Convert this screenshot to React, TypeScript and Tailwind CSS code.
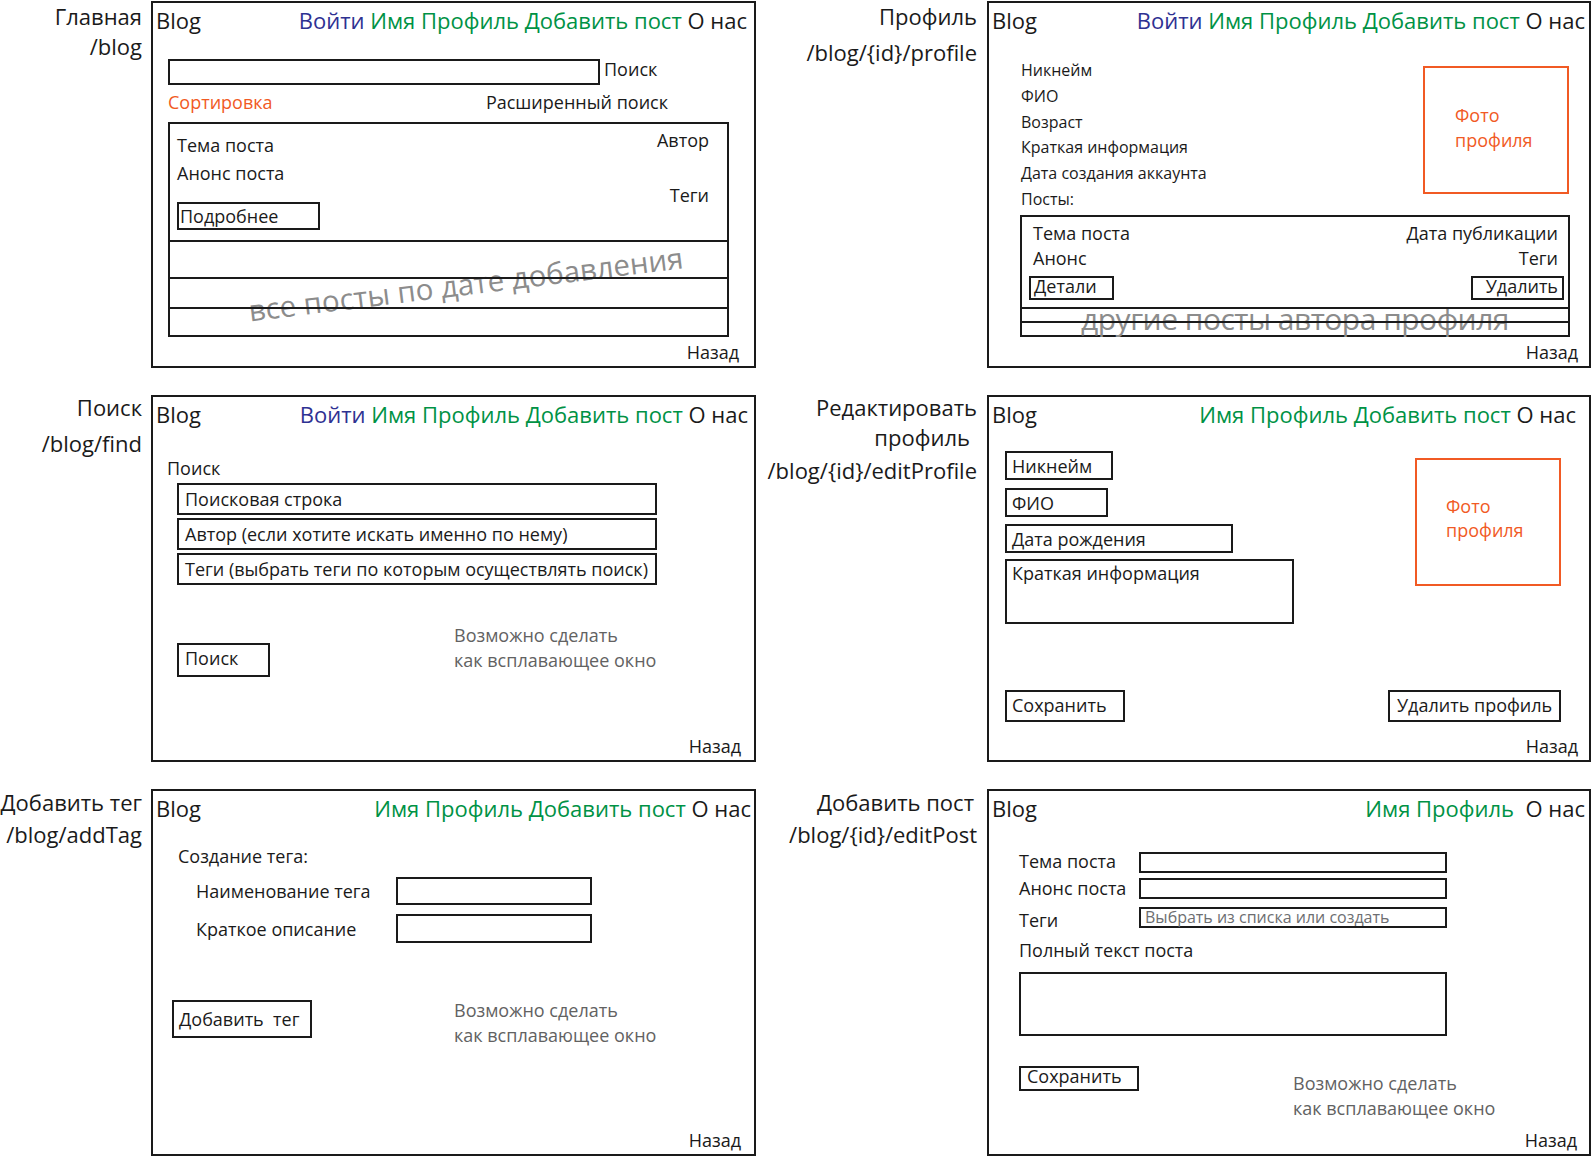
import React from "react";

const B = "border-2 border-[#1a1a1a]";
const ORANGE_BOX = "border-2 border-[#f15a24] text-[#f15a24]";
const NOTE = "leading-[25px] text-[#626262] whitespace-nowrap";

const navFull = (
  <>
    <span className="text-[#2e3192]">Войти</span>{" "}
    <span className="text-[#009245]">Имя Профиль Добавить пост</span> О нас
  </>
);

const navUser = (
  <>
    <span className="text-[#009245]">Имя Профиль Добавить пост</span> О нас
  </>
);

const navShort = (
  <>
    <span className="text-[#009245]">Имя Профиль</span>
    {"\u00a0 "}О нас
  </>
);

function Frame({ children }: { children: React.ReactNode }) {
  return <div className={`relative flex h-[367px] flex-col bg-white ${B}`}>{children}</div>;
}

function Header({ nav, pr }: { nav: React.ReactNode; pr: string }) {
  return (
    <div className={`flex items-start justify-between whitespace-nowrap pl-[3px] pt-[3px] text-[22px] leading-[28px] ${pr}`}>
      <span>Blog</span>
      <span>{nav}</span>
    </div>
  );
}

function Back({ pr }: { pr: string }) {
  return <div className={`mt-auto self-end pb-[2px] text-[18px] leading-[24px] ${pr}`}>Назад</div>;
}

function Route({ children, pr }: { children: React.ReactNode; pr: string }) {
  return (
    <div className={`flex flex-col items-end whitespace-nowrap text-[22px] leading-[28px] ${pr}`}>{children}</div>
  );
}

function HomeFrame() {
  return (
    <Frame>
      <Header nav={navFull} pr="pr-[7px]" />
      <div className="ml-[15px] mt-[25px] flex items-start">
        <div className={`h-[26px] w-[432px] ${B}`} />
        <span className="-mt-[2px] ml-[4px] text-[18px] leading-[24px]">Поиск</span>
      </div>
      <div className="ml-[15px] mt-[5px] flex w-[500px] justify-between text-[18px] leading-[24px]">
        <span className="text-[#f15a24]">Сортировка</span>
        <span>Расширенный поиск</span>
      </div>
      <div className={`relative ml-[15px] mt-[8px] flex h-[215px] w-[561px] flex-col text-[18px] leading-[24px] ${B}`}>
        <div className="pointer-events-none absolute inset-x-0 top-[143px] z-0 flex justify-center pl-[35px]">
          <span className="rotate-[-7deg] whitespace-nowrap text-[29.5px] leading-[34px] text-[#8c8c8c]">
            все посты по дате добавления
          </span>
        </div>
        <div className="relative z-10 flex h-[118px] justify-between border-b-2 border-[#1a1a1a] pl-[7px] pr-[18px]">
          <div className="flex flex-col items-start pt-[9px]">
            <span>Тема поста</span>
            <span className="mt-[4px]">Анонс поста</span>
            <div className={`mt-[17px] flex h-[28px] w-[143px] items-center pl-[1px] ${B}`}>Подробнее</div>
          </div>
          <div className="flex flex-col items-end pt-[4px]">
            <span>Автор</span>
            <span className="mt-[31px]">Теги</span>
          </div>
        </div>
        <div className="relative z-10 h-[37px] border-b-2 border-[#1a1a1a]" />
        <div className="relative z-10 h-[30px] border-b-2 border-[#1a1a1a]" />
        <div className="flex-1" />
      </div>
      <Back pr="pr-[15px]" />
    </Frame>
  );
}

function ProfileFrame() {
  const fields = ["Никнейм", "ФИО", "Возраст", "Краткая информация", "Дата создания аккаунта", "Посты:"];
  return (
    <Frame>
      <Header nav={navFull} pr="pr-[4px]" />
      <div className="mt-[24px] flex items-start justify-between pl-[32px] pr-[20px]">
        <div className="flex flex-col whitespace-nowrap text-[16px] leading-[25.8px]">
          {fields.map((f) => (
            <span key={f}>{f}</span>
          ))}
        </div>
        <div className={`mt-[8px] h-[128px] w-[146px] pl-[30px] pt-[35px] text-[18px] leading-[25px] ${ORANGE_BOX}`}>
          Фото
          <br />
          профиля
        </div>
      </div>
      <div className={`relative ml-[31px] mt-[2px] flex h-[122px] w-[550px] flex-col text-[18px] leading-[25px] ${B}`}>
        <div className="pointer-events-none absolute inset-x-0 top-[87px] z-0 flex justify-center">
          <span className="whitespace-nowrap text-[30px] leading-[30px] tracking-[-0.5px] text-[#8c8c8c]">
            другие посты автора профиля
          </span>
        </div>
        <div className="relative z-10 flex h-[92px] flex-col border-b-2 border-[#1a1a1a] pt-[4px]">
          <div className="flex justify-between pl-[11px] pr-[10px]">
            <span>Тема поста</span>
            <span>Дата публикации</span>
          </div>
          <div className="flex justify-between pl-[11px] pr-[10px]">
            <span>Анонс</span>
            <span>Теги</span>
          </div>
          <div className="mt-[5px] flex justify-between pl-[7px] pr-[4px] leading-[17px]">
            <div className={`h-[24px] w-[85px] pl-[3px] ${B}`}>Детали</div>
            <div className={`h-[24px] w-[93px] pr-[4px] text-right ${B}`}>Удалить</div>
          </div>
        </div>
        <div className="relative z-10 h-[14px] border-b-2 border-[#1a1a1a]" />
        <div className="flex-1" />
      </div>
      <Back pr="pr-[11px]" />
    </Frame>
  );
}

function FindFrame() {
  const inputs = [
    "Поисковая строка",
    "Автор (если хотите искать именно по нему)",
    "Теги (выбрать теги по которым осуществлять поиск)",
  ];
  return (
    <Frame>
      <Header nav={navFull} pr="pr-[6px]" />
      <div className="mt-[28px] pl-[14px] text-[18px] leading-[24px]">Поиск</div>
      <div className="ml-[24px] mt-[3px] flex flex-col gap-[3px] text-[18px] leading-[24px]">
        {inputs.map((t) => (
          <div key={t} className={`flex h-[32px] w-[480px] items-center whitespace-nowrap pl-[6px] ${B}`}>
            {t}
          </div>
        ))}
      </div>
      <div className="ml-[24px] mt-[38px] flex items-start text-[18px]">
        <div className={`mt-[20px] h-[34px] w-[93px] pl-[6px] pt-[1px] leading-[24px] ${B}`}>Поиск</div>
        <div className={`ml-[184px] ${NOTE}`}>
          Возможно сделать
          <br />
          как всплавающее окно
        </div>
      </div>
      <Back pr="pr-[13px]" />
    </Frame>
  );
}

function EditProfileFrame() {
  return (
    <Frame>
      <Header nav={navUser} pr="pr-[13px]" />
      <div className="mt-[23px] flex items-start justify-between pl-[16px] pr-[28px] text-[18px] leading-[24px]">
        <div className="flex flex-col items-start whitespace-nowrap">
          <div className={`flex h-[29px] w-[108px] items-center pl-[5px] ${B}`}>Никнейм</div>
          <div className={`mt-[8px] flex h-[29px] w-[103px] items-center pl-[5px] ${B}`}>ФИО</div>
          <div className={`mt-[7px] flex h-[29px] w-[228px] items-center pl-[5px] ${B}`}>Дата рождения</div>
          <div className={`mt-[6px] h-[65px] w-[289px] pl-[5px] ${B}`}>Краткая информация</div>
        </div>
        <div className={`mt-[7px] h-[128px] w-[146px] pl-[29px] pt-[34px] ${ORANGE_BOX}`}>
          Фото
          <br />
          профиля
        </div>
      </div>
      <div className="mt-[66px] flex justify-between pl-[16px] pr-[28px] text-[18px] leading-[24px]">
        <div className={`h-[32px] w-[120px] pl-[5px] pt-[1px] ${B}`}>Сохранить</div>
        <div className={`h-[32px] w-[173px] whitespace-nowrap pl-[7px] pt-[1px] ${B}`}>Удалить профиль</div>
      </div>
      <Back pr="pr-[11px]" />
    </Frame>
  );
}

function AddTagFrame() {
  return (
    <Frame>
      <Header nav={navUser} pr="pr-[3px]" />
      <div className="mt-[22px] pl-[25px] text-[18px] leading-[24px]">Создание тега:</div>
      <div className="mt-[9px] flex items-center text-[18px] leading-[24px]">
        <span className="w-[243px] shrink-0 whitespace-nowrap pl-[43px]">Наименование тега</span>
        <div className={`h-[28px] w-[196px] ${B}`} />
      </div>
      <div className="mt-[9px] flex items-center text-[18px] leading-[24px]">
        <span className="w-[243px] shrink-0 whitespace-nowrap pl-[43px]">Краткое описание</span>
        <div className={`h-[29px] w-[196px] ${B}`} />
      </div>
      <div className="ml-[19px] mt-[57px] flex items-start text-[18px]">
        <div className={`flex h-[38px] w-[140px] items-center whitespace-pre pl-[5px] leading-[24px] ${B}`}>
          {"Добавить  тег"}
        </div>
        <div className={`-mt-[2px] ml-[142px] ${NOTE}`}>
          Возможно сделать
          <br />
          как всплавающее окно
        </div>
      </div>
      <Back pr="pr-[13px]" />
    </Frame>
  );
}

function EditPostFrame() {
  return (
    <Frame>
      <Header nav={navShort} pr="pr-[4px]" />
      <div className="mt-[27px] flex items-start pl-[30px] text-[18px] leading-[24px]">
        <span className="w-[120px] shrink-0">Тема поста</span>
        <div className={`mt-[3px] h-[21px] w-[308px] ${B}`} />
      </div>
      <div className="mt-[3px] flex items-start pl-[30px] text-[18px] leading-[24px]">
        <span className="w-[120px] shrink-0 whitespace-nowrap">Анонс поста</span>
        <div className={`mt-[2px] h-[21px] w-[308px] ${B}`} />
      </div>
      <div className="mt-[7px] flex items-start pl-[30px] text-[18px] leading-[24px]">
        <span className="mt-[1px] w-[120px] shrink-0">Теги</span>
        <div className={`h-[21px] w-[308px] whitespace-nowrap pl-[4px] text-[16px] leading-[17px] text-[#6d6e71] ${B}`}>
          Выбрать из списка или создать
        </div>
      </div>
      <div className="mt-[6px] pl-[30px] text-[18px] leading-[24px]">Полный текст поста</div>
      <div className={`ml-[30px] mt-[10px] h-[64px] w-[428px] ${B}`} />
      <div className="ml-[30px] mt-[30px] flex items-start text-[18px]">
        <div className={`h-[25px] w-[120px] pl-[6px] leading-[17px] ${B}`}>Сохранить</div>
        <div className={`ml-[154px] mt-[5px] ${NOTE}`}>
          Возможно сделать
          <br />
          как всплавающее окно
        </div>
      </div>
      <Back pr="pr-[12px]" />
    </Frame>
  );
}

export default function App() {
  return (
    <div className="min-h-[1157px] w-[1593px] bg-white font-['Open_Sans',sans-serif] text-[#1a1a1a]">
      <div className="grid grid-cols-[151px_605px_231px_604px] gap-y-[27px] pt-[1px]">
        <Route pr="pr-[9px]">
          <span className="mt-[0.5px]">Главная</span>
          <span className="mt-[2px]">/blog</span>
        </Route>
        <HomeFrame />
        <Route pr="pr-[10px]">
          <span className="mt-[0.5px]">Профиль</span>
          <span className="mt-[8px]">/blog/{"{id}"}/profile</span>
        </Route>
        <ProfileFrame />

        <Route pr="pr-[9px]">
          <span className="-mt-[2.5px]">Поиск</span>
          <span className="mt-[8px]">/blog/find</span>
        </Route>
        <FindFrame />
        <Route pr="pr-[10px]">
          <span className="-mt-[2.5px]">Редактировать</span>
          <span className="mr-[7px] mt-[2px]">профиль</span>
          <span className="mt-[5px]">/blog/{"{id}"}/editProfile</span>
        </Route>
        <EditProfileFrame />

        <Route pr="pr-[9px]">
          <span className="-mt-[1.5px]">Добавить тег</span>
          <span className="mt-[4px]">/blog/addTag</span>
        </Route>
        <AddTagFrame />
        <Route pr="pr-[10px]">
          <span className="-mt-[1.5px] mr-[3px]">Добавить пост</span>
          <span className="mt-[4px]">/blog/{"{id}"}/editPost</span>
        </Route>
        <EditPostFrame />
      </div>
    </div>
  );
}
